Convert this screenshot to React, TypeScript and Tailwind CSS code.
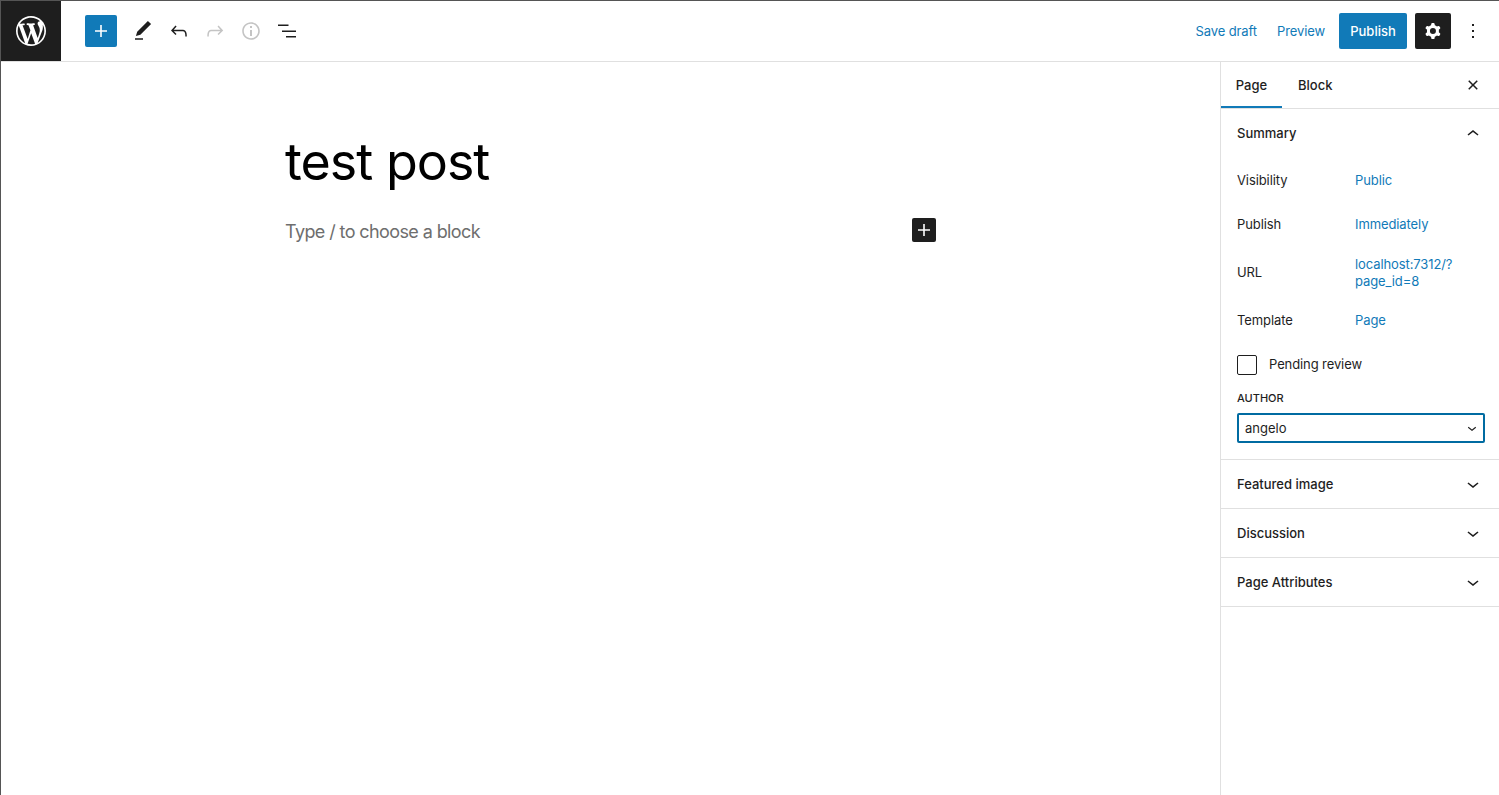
const Icon = ({ d, size = 24, className = "" }: { d: string; size?: number; className?: string }) => (
  <svg viewBox="0 0 24 24" width={size} height={size} fill="currentColor" fillRule="evenodd" className={className}>
    <path d={d} />
  </svg>
);

const icons = {
  plus: "M18 11.2h-5.2V6h-1.6v5.2H6v1.6h5.2V18h1.6v-5.2H18z",
  edit: "M20.1 5.1L16.9 2 6.2 12.7l-1.3 4.4 4.5-1.3L20.1 5.1zM4 20.8h8v-1.5H4v1.5z",
  undo: "M18.3 11.7c-.6-.6-1.4-.9-2.3-.9H6.7l2.9-3.3-1.1-1-4.5 5L8.5 16l1-1-2.7-2.7H16c.5 0 .9.2 1.3.5 1 1 1 3.4 1 4.5v.3h1.5v-.2c0-1.5 0-4.3-1.5-5.7z",
  redo: "M15.6 6.5l-1.1 1 2.9 3.3H8c-.9 0-1.7.3-2.3.9-1.4 1.5-1.4 4.2-1.4 5.6v.2h1.5v-.3c0-1.1 0-3.5 1-4.5.3-.3.7-.5 1.3-.5h9.2L14.5 15l1.1 1.1 4.6-4.6-4.6-5z",
  info: "M12 3.2c-4.8 0-8.8 3.9-8.8 8.8 0 4.8 3.9 8.8 8.8 8.8 4.8 0 8.8-3.9 8.8-8.8 0-4.8-4-8.8-8.8-8.8zm0 16c-4 0-7.2-3.3-7.2-7.2C4.8 8 8 4.8 12 4.8s7.2 3.3 7.2 7.2c0 4-3.2 7.2-7.2 7.2zM11 17h2v-6h-2v6zm0-8h2V7h-2v2z",
  list: "M3 5.5h10.5V7H3zM7 11.5h14V13H7zM11 17h10v1.5H11z",
  cog: "M10.289 4.836A1 1 0 0111.275 4h1.306a1 1 0 01.987.836l.244 1.466c.787.26 1.503.679 2.108 1.218l1.393-.522a1 1 0 011.216.437l.653 1.13a1 1 0 01-.23 1.273l-1.148.944a6.025 6.025 0 010 2.435l1.149.946a1 1 0 01.23 1.272l-.653 1.13a1 1 0 01-1.216.437l-1.394-.522c-.605.54-1.32.958-2.108 1.218l-.244 1.466a1 1 0 01-.987.836h-1.306a1 1 0 01-.986-.836l-.244-1.466a5.995 5.995 0 01-2.108-1.218l-1.394.522a1 1 0 01-1.217-.436l-.653-1.131a1 1 0 01.23-1.272l1.149-.946a6.026 6.026 0 010-2.435l-1.148-.944a1 1 0 01-.23-1.272l.653-1.131a1 1 0 011.217-.437l1.393.522a5.994 5.994 0 012.108-1.218l.244-1.466zM14.929 12a3 3 0 11-6 0 3 3 0 016 0z",
  more: "M13 19h-2v-2h2v2zm0-6h-2v-2h2v2zm0-6h-2V5h2v2z",
  close: "M12 13.06l3.712 3.713 1.061-1.06L13.061 12l3.712-3.712-1.06-1.06L12 10.938 8.288 7.227l-1.061 1.06L10.939 12l-3.712 3.712 1.06 1.061L12 13.061z",
  up: "M6.5 12.4L12 8l5.5 4.4-.9 1.2L12 10l-4.5 3.6-1-1.2z",
  down: "M17.5 11.6L12 16l-5.5-4.4.9-1.2L12 14l4.5-3.6 1 1.2z",
};

const wpLogo =
  "M20 10c0-5.51-4.49-10-10-10C4.48 0 0 4.49 0 10c0 5.52 4.48 10 10 10 5.51 0 10-4.48 10-10zM7.78 15.37L4.37 6.22c.55-.02 1.17-.08 1.17-.08.5-.06.44-1.13-.06-1.11 0 0-1.45.11-2.37.11-.18 0-.37 0-.58-.01C4.12 2.69 6.87 1.11 10 1.11c2.33 0 4.45.87 6.05 2.34-.68-.11-1.65.39-1.65 1.58 0 .74.45 1.36.9 2.1.35.61.55 1.36.55 2.46 0 1.49-1.4 5-1.4 5l-3.03-8.37c.54-.02.82-.17.82-.17.5-.05.44-1.25-.06-1.22 0 0-1.44.12-2.38.12-.87 0-2.33-.12-2.33-.12-.5-.03-.56 1.2-.06 1.22l.92.08 1.26 3.41zM17.41 10c.24-.64.74-1.87.43-4.25.7 1.29 1.05 2.71 1.05 4.25 0 3.29-1.73 6.24-4.4 7.78.97-2.59 1.94-5.2 2.92-7.78zM6.1 18.09C3.12 16.65 1.11 13.53 1.11 10c0-1.3.23-2.48.72-3.59C3.25 10.3 4.67 14.2 6.1 18.09zm4.03-6.63l2.58 6.98c-.86.29-1.76.45-2.71.45-.79 0-1.57-.11-2.29-.33.81-2.38 1.62-4.74 2.42-7.1z";

const summaryRows = [
  { label: "Visibility", value: "Public", height: "h-[44px]", nudge: "pb-[2px]" },
  { label: "Publish", value: "Immediately", height: "h-[44px]", nudge: "pb-[2px]" },
  { label: "URL", value: "localhost:7312/?\npage_id=8", height: "h-[52px]", nudge: "" },
  { label: "Template", value: "Page", height: "h-[44px]", nudge: "pb-[2px]" },
];

const panels = ["Featured image", "Discussion", "Page Attributes"];

function Toolbar() {
  return (
    <header className="flex h-[61px] shrink-0 items-center border-b border-[#e0e0e0] bg-white">
      <div className="flex h-[60px] w-[60px] shrink-0 items-center justify-center bg-[#1e1e1e] text-white">
        <svg viewBox="0 0 20 20" width="30" height="30" fill="currentColor" fillRule="evenodd">
          <path d={wpLogo} />
        </svg>
      </div>
      <div className="ml-6 flex h-8 w-8 items-center justify-center rounded-[2px] bg-[#117ab8] text-white">
        <Icon d={icons.plus} />
      </div>
      <div className="ml-[14px] flex items-center gap-3 text-[#1e1e1e]">
        <Icon d={icons.edit} />
        <Icon d={icons.undo} />
        <Icon d={icons.redo} className="text-[#c4c4c4]" />
        <Icon d={icons.info} className="text-[#c4c4c4]" />
        <Icon d={icons.list} />
      </div>
      <div className="ml-auto flex items-center text-[13px]">
        <span className="pt-[2px] tracking-[-0.1px] text-[#117ab8]">Save draft</span>
        <span className="ml-5 pt-[2px] tracking-[-0.1px] text-[#117ab8]">Preview</span>
        <span className="ml-[14px] flex h-9 w-[68px] items-center justify-center rounded-[2px] bg-[#117ab8] pt-[2px] font-medium text-white">
          Publish
        </span>
        <span className="ml-2 flex h-9 w-9 items-center justify-center rounded-[2px] bg-[#1e1e1e] text-white">
          <Icon d={icons.cog} />
        </span>
        <span className="mr-[14px] ml-[10px] flex text-[#1e1e1e]">
          <Icon d={icons.more} />
        </span>
      </div>
    </header>
  );
}

function Sidebar() {
  return (
    <aside className="w-[279px] shrink-0 border-l border-[#e0e0e0] bg-white text-[13px] text-[#1e1e1e]">
      <div className="flex h-[47px] items-stretch border-b border-[#e0e0e0] font-medium">
        <div className="flex w-[61px] items-center justify-center border-b-2 border-[#117ab8] pt-[3px]">Page</div>
        <div className="ml-[16px] flex items-center pt-px">Block</div>
        <div className="mr-[14px] ml-auto flex items-center">
          <Icon d={icons.close} size={24} />
        </div>
      </div>

      <section className="h-[351px] border-b border-[#e0e0e0] px-4">
        <div className="flex h-[49px] items-center justify-between font-medium">
          Summary
          <Icon d={icons.up} className="mr-[-2px]" />
        </div>
        <div className="pt-[1px]">
          {summaryRows.map((row) => (
            <div key={row.label} className={`flex items-center tracking-[-0.1px] ${row.height}`}>
              <span className="w-[118px] shrink-0">{row.label}</span>
              <span className={`whitespace-pre-line leading-[17px] text-[#117ab8] ${row.nudge}`}>{row.value}</span>
            </div>
          ))}
        </div>
        <label className="mt-[12px] flex items-center tracking-[-0.1px]">
          <span className="h-5 w-5 rounded-[2px] border border-[#1e1e1e]" />
          <span className="ml-3">Pending review</span>
        </label>
        <div className="mt-[15px] text-[11px] leading-4 font-medium">AUTHOR</div>
        <div className="mt-[7px] mr-[-2px] flex h-[30px] items-center justify-between rounded-[2px] border-2 border-[#006ba1] pr-[2px] pl-[6px]">
          <span className="pt-[2px]">angelo</span>
          <Icon d={icons.down} size={18} />
        </div>
      </section>

      {panels.map((title) => (
        <section key={title} className="flex h-[49px] items-center justify-between border-b border-[#e0e0e0] px-4 font-medium">
          <span className="pt-[2px]">{title}</span>
          <Icon d={icons.down} className="mr-[-2px]" />
        </section>
      ))}
    </aside>
  );
}

export default function App() {
  return (
    <div
      className="flex h-[795px] flex-col overflow-hidden border-t border-l border-[#555555] bg-white"
      style={{ fontFamily: "Inter, 'Liberation Sans', sans-serif" }}
    >
      <Toolbar />
      <div className="flex min-h-0 flex-1">
        <main className="min-w-0 flex-1 bg-white pl-[284px]">
          <h1 className="mt-[70px] text-[52px] leading-[60px] font-normal tracking-[-1px] text-black">test post</h1>
          <div className="mt-[24px] flex w-[651px] items-start justify-between">
            <p className="mt-[2px] text-[18px] leading-7 tracking-[-0.6px] text-[#6e6e6e]">Type / to choose a block</p>
            <span className="mt-[2px] flex h-6 w-6 items-center justify-center rounded-[2px] bg-[#1e1e1e] text-white">
              <Icon d={icons.plus} />
            </span>
          </div>
        </main>
        <Sidebar />
      </div>
    </div>
  );
}
